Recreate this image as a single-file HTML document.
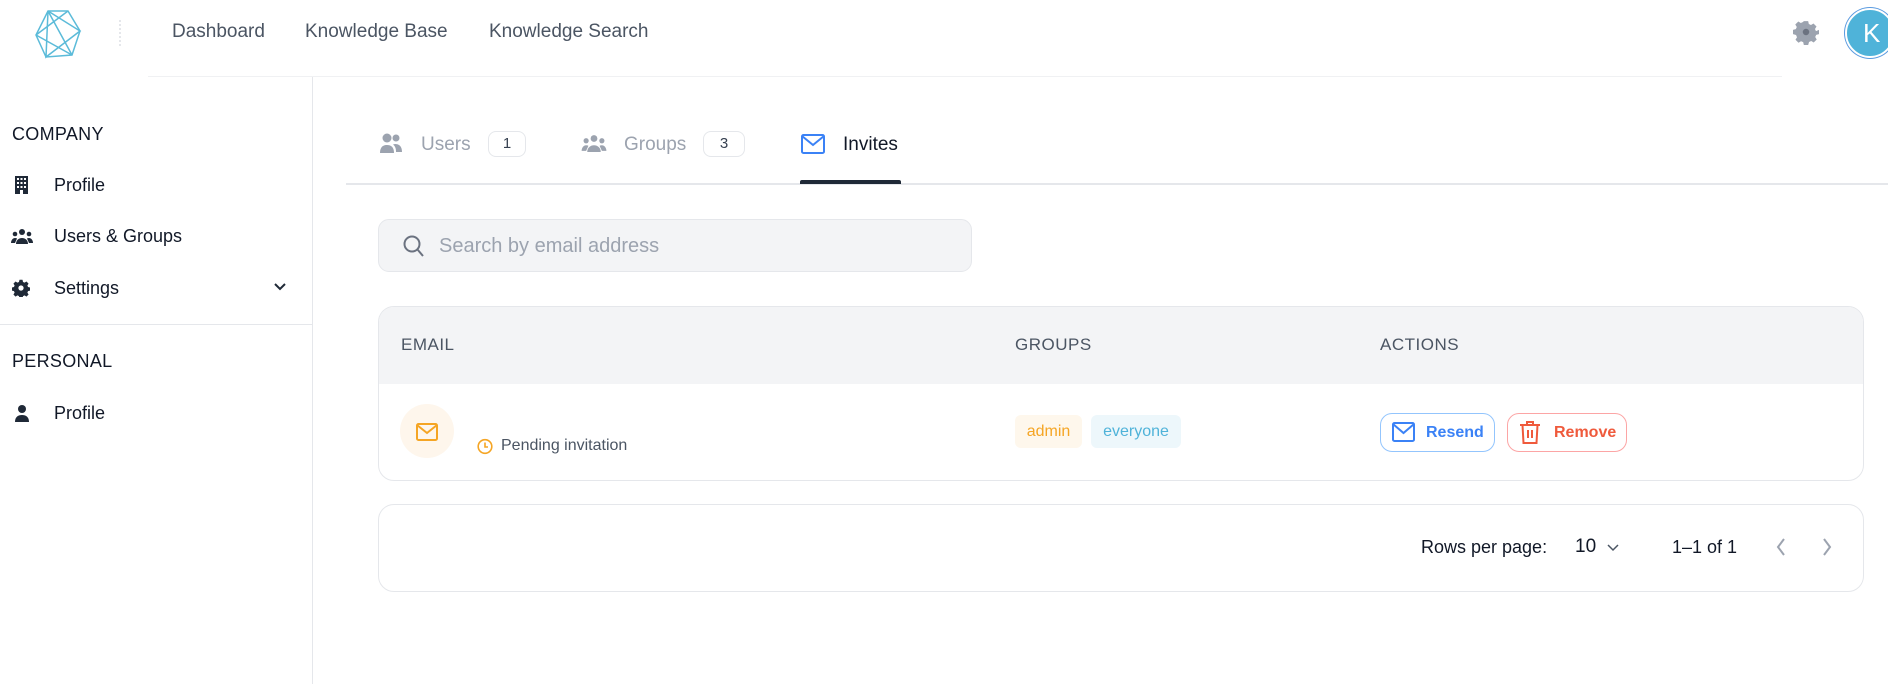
<!DOCTYPE html>
<html><head><meta charset="utf-8"><style>
*{box-sizing:border-box;margin:0;padding:0}
body{width:1888px;height:684px;overflow:hidden;background:#fff;font-family:"Liberation Sans",sans-serif;position:relative;color:#111827}
.a{position:absolute}
.nav{font-size:19px;color:#4b5563;top:21px}
.side{font-size:18px;color:#111827}
.sec{font-size:18px;color:#111827;font-weight:500;letter-spacing:.3px}
.badge{border:1px solid #e5e7eb;border-radius:8px;font-size:15px;text-align:center;height:26px;line-height:24px;color:#374151}
.th{font-size:17px;color:#4b5563;top:335px;letter-spacing:.5px}
</style></head><body>
<!-- header -->
<svg class="a" style="left:34px;top:9px" width="48" height="50" viewBox="0 0 48 50" fill="none" stroke="#5bbbd9" stroke-width="1.5"><polygon points="14,2 34,2 46,22 38,46 12,48 2,26"/><polyline points="14,2 46,22 12,48 14,2"/><line x1="2" y1="26" x2="34" y2="2"/><line x1="2" y1="26" x2="38" y2="46"/><line x1="14" y1="2" x2="38" y2="46"/></svg>
<div class="a" style="left:119px;top:20px;width:2px;height:26px;border-left:2px dotted #e5e7eb"></div>
<div class="a nav" style="left:172px">Dashboard</div>
<div class="a nav" style="left:305px">Knowledge Base</div>
<div class="a nav" style="left:489px">Knowledge Search</div>
<div class="a" style="left:148px;top:76px;width:1634px;height:1px;background:#f0f1f3"></div>
<svg class="a" style="left:1793px;top:19px" width="26" height="26" viewBox="0 0 24 24"><path fill="#9ca3af" d="M10 2h4l.6 2.6 2 .9 2.3-1.4 2.8 2.8-1.4 2.3.9 2L24 10v4l-2.6.6-.9 2 1.4 2.3-2.8 2.8-2.3-1.4-2 .9L14 24h-4l-.6-2.6-2-.9-2.3 1.4-2.8-2.8 1.4-2.3-.9-2L0 14v-4l2.6-.6.9-2-1.4-2.3 2.8-2.8 2.3 1.4 2-.9z"/><circle cx="12" cy="12" r="3" fill="#6b7280"/></svg>
<div class="a" style="left:1845px;top:8px;width:50px;height:50px;border-radius:50%;background:#4fb3d9;border:2px solid #fff;box-shadow:0 0 0 1px #5b9be0;color:#fff;font-size:26px;line-height:46px;padding-left:16px">K</div>
<!-- sidebar -->
<div class="a" style="left:312px;top:77px;width:1px;height:607px;background:#e5e7eb"></div>
<div class="a sec" style="left:12px;top:124px">COMPANY</div>
<svg class="a" style="left:15px;top:176px" width="13" height="18" viewBox="0 0 13 18"><rect width="13" height="18" fill="#1f2937"/><g fill="#fff"><rect x="2" y="2" width="2" height="2"/><rect x="5.5" y="2" width="2" height="2"/><rect x="9" y="2" width="2" height="2"/><rect x="2" y="6" width="2" height="2"/><rect x="5.5" y="6" width="2" height="2"/><rect x="9" y="6" width="2" height="2"/><rect x="2" y="10" width="2" height="2"/><rect x="5.5" y="10" width="2" height="2"/><rect x="9" y="10" width="2" height="2"/><rect x="5" y="14" width="3" height="4"/></g></svg>
<div class="a side" style="left:54px;top:175px">Profile</div>
<svg class="a" style="left:11px;top:228px" width="22" height="16" viewBox="0 0 22 16" fill="#1f2937"><circle cx="11" cy="4" r="3"/><circle cx="4" cy="6" r="2.3"/><circle cx="18" cy="6" r="2.3"/><path d="M5 16c0-4 3-6 6-6s6 2 6 6z"/><path d="M0 15c0-3 2-5 4-5 1.5 0 2 .5 2 .5L4 15z"/><path d="M22 15c0-3-2-5-4-5-1.5 0-2 .5-2 .5l2 4.5z"/></svg>
<div class="a side" style="left:54px;top:226px">Users &amp; Groups</div>
<svg class="a" style="left:12px;top:279px" width="18" height="18" viewBox="0 0 24 24"><path fill="#1f2937" d="M10 1h4l.7 3 2 .9 2.6-1.6 2.8 2.8-1.6 2.6.9 2 3 .7v4l-3 .7-.9 2 1.6 2.6-2.8 2.8-2.600-1.6-2 .9-.7 3h-4l-.7-3-2-.9-2.6 1.6-2.8-2.8 1.6-2.6-.9-2-3-.7v-4l3-.7.9-2L1.9 6.1l2.8-2.8 2.6 1.6 2-.9z"/><circle cx="12" cy="12" r="3.5" fill="#fff"/></svg>
<div class="a side" style="left:54px;top:278px">Settings</div>
<svg class="a" style="left:274px;top:283px" width="12" height="8" viewBox="0 0 12 8" fill="none" stroke="#1f2937" stroke-width="2"><polyline points="1,1 6,6 11,1"/></svg>
<div class="a" style="left:0;top:324px;width:312px;height:1px;background:#e5e7eb"></div>
<div class="a sec" style="left:12px;top:351px">PERSONAL</div>
<svg class="a" style="left:14px;top:404px" width="16" height="18" viewBox="0 0 16 18" fill="#1f2937"><circle cx="8" cy="5" r="4"/><path d="M1 18c0-5 3-7 7-7s7 2 7 7z"/></svg>
<div class="a side" style="left:54px;top:403px">Profile</div>
<!-- tabs -->
<svg class="a" style="left:380px;top:133px" width="22" height="20" viewBox="0 0 22 20" fill="#9ca3af"><circle cx="7" cy="5" r="4.5"/><circle cx="16" cy="5" r="3.5"/><path d="M0 20c0-6 3-8 7-8s7 2 7 8z"/><path d="M15 11c4 0 7 2 7 8h-6c0-4-1-6-3-7.5z"/></svg>
<div class="a" style="left:421px;top:134px;font-size:19px;color:#9ca3af">Users</div>
<div class="a badge" style="left:488px;top:131px;width:38px">1</div>
<svg class="a" style="left:581px;top:134px" width="26" height="18" viewBox="0 0 22 16" fill="#9ca3af"><circle cx="11" cy="4" r="3"/><circle cx="4" cy="6" r="2.3"/><circle cx="18" cy="6" r="2.3"/><path d="M5 16c0-4 3-6 6-6s6 2 6 6z"/><path d="M0 15c0-3 2-5 4-5 1.5 0 2 .5 2 .5L4 15z"/><path d="M22 15c0-3-2-5-4-5-1.5 0-2 .5-2 .5l2 4.5z"/></svg>
<div class="a" style="left:624px;top:134px;font-size:19px;color:#9ca3af">Groups</div>
<div class="a badge" style="left:703px;top:131px;width:42px">3</div>
<svg class="a" style="left:801px;top:134px" width="24" height="20" viewBox="0 0 24 20" fill="none" stroke="#3b82f6" stroke-width="2"><rect x="1" y="1" width="22" height="18" rx="1.5"/><polyline points="1,2 12,11 23,2"/></svg>
<div class="a" style="left:843px;top:134px;font-size:19px;color:#111827;font-weight:500">Invites</div>
<div class="a" style="left:346px;top:183px;width:1542px;height:2px;background:#e5e7eb"></div>
<div class="a" style="left:800px;top:180px;width:101px;height:4px;border-radius:2px 2px 0 0;background:#1f2937"></div>
<!-- search -->
<div class="a" style="left:378px;top:219px;width:594px;height:53px;background:#f3f4f6;border:1px solid #e5e7eb;border-radius:11px"></div>
<svg class="a" style="left:403px;top:235px" width="22" height="23" viewBox="0 0 22 23" fill="none" stroke="#6b7280" stroke-width="2"><circle cx="9" cy="9" r="7.5"/><line x1="14.5" y1="14.5" x2="20" y2="21"/></svg>
<div class="a" style="left:439px;top:235px;font-size:20px;color:#9ca3af">Search by email address</div>
<!-- table -->
<div class="a" style="left:378px;top:306px;width:1486px;height:175px;border:1px solid #e5e7eb;border-radius:16px;overflow:hidden"><div style="height:77px;background:#f3f4f6"></div></div>
<div class="a th" style="left:401px">EMAIL</div>
<div class="a th" style="left:1015px">GROUPS</div>
<div class="a th" style="left:1380px">ACTIONS</div>
<div class="a" style="left:400px;top:404px;width:54px;height:54px;border-radius:50%;background:#fef6ec"></div>
<svg class="a" style="left:416px;top:423px" width="22" height="18" viewBox="0 0 22 18" fill="none" stroke="#f5a524" stroke-width="2"><rect x="1" y="1" width="20" height="16" rx="1.5"/><polyline points="1,2 11,10 21,2"/></svg>
<svg class="a" style="left:477px;top:438px" width="16" height="17" viewBox="0 0 16 17" fill="none" stroke="#f5a524" stroke-width="1.6"><circle cx="8" cy="8.5" r="6.8"/><polyline points="8,4.5 8,9 11,9"/></svg>
<div class="a" style="left:501px;top:437px;font-size:16px;color:#4b5563">Pending invitation</div>
<div class="a" style="left:1015px;top:415px;width:67px;height:33px;border-radius:6px;background:#fef7ec;color:#f5a524;font-size:16px;line-height:33px;text-align:center">admin</div>
<div class="a" style="left:1091px;top:415px;width:90px;height:33px;border-radius:6px;background:#edf7fb;color:#4fb3d9;font-size:16px;line-height:33px;text-align:center">everyone</div>
<div class="a" style="left:1380px;top:413px;width:115px;height:39px;border:1.5px solid #93c5fd;border-radius:12px"></div>
<svg class="a" style="left:1392px;top:422px" width="23" height="20" viewBox="0 0 23 20" fill="none" stroke="#3b82f6" stroke-width="2"><rect x="1" y="1" width="21" height="18" rx="1.5"/><polyline points="1,2 11.5,11 22,2"/></svg>
<div class="a" style="left:1426px;top:424px;font-size:16px;font-weight:bold;color:#3b82f6">Resend</div>
<div class="a" style="left:1507px;top:413px;width:120px;height:39px;border:1.5px solid #fca5a5;border-radius:12px"></div>
<svg class="a" style="left:1519px;top:420px" width="22" height="24" viewBox="0 0 22 24" fill="none" stroke="#ef5a3c" stroke-width="2"><line x1="1" y1="5" x2="21" y2="5"/><path d="M8 5V2h6v3"/><path d="M3.5 5l1 18h13l1-18"/><line x1="9" y1="10" x2="9" y2="18"/><line x1="13" y1="10" x2="13" y2="18"/></svg>
<div class="a" style="left:1554px;top:424px;font-size:16px;font-weight:bold;color:#ef5a3c">Remove</div>
<!-- pagination -->
<div class="a" style="left:378px;top:504px;width:1486px;height:88px;border:1px solid #e5e7eb;border-radius:16px"></div>
<div class="a" style="left:1421px;top:537px;font-size:18px;color:#111827">Rows per page:</div>
<div class="a" style="left:1575px;top:536px;font-size:19px;color:#111827">10</div>
<svg class="a" style="left:1607px;top:544px" width="12" height="8" viewBox="0 0 12 8" fill="none" stroke="#4b5563" stroke-width="1.5"><polyline points="1,1 6,6 11,1"/></svg>
<div class="a" style="left:1672px;top:537px;font-size:18px;color:#111827">1–1 of 1</div>
<svg class="a" style="left:1776px;top:538px" width="10" height="18" viewBox="0 0 10 18" fill="none" stroke="#9ca3af" stroke-width="2"><polyline points="8,1 2,9 8,17"/></svg>
<svg class="a" style="left:1822px;top:538px" width="10" height="18" viewBox="0 0 10 18" fill="none" stroke="#9ca3af" stroke-width="2"><polyline points="2,1 8,9 2,17"/></svg>
</body></html>
